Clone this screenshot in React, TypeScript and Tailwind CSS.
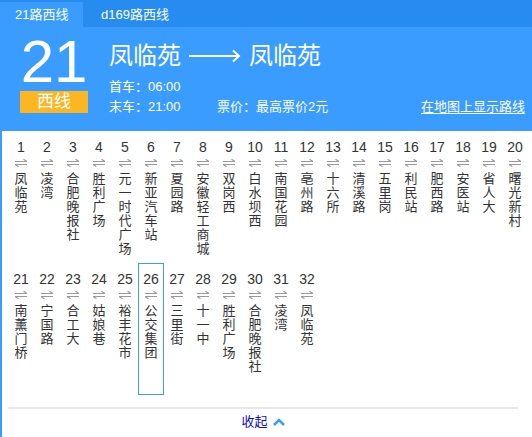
import React from "react";

const stations = [
  "凤临苑", "凌湾", "合肥晚报社", "胜利广场", "元一时代广场", "新亚汽车站", "夏园路",
  "安徽轻工商城", "双岗西", "白水坝西", "南国花园", "亳州路", "十六所", "清溪路",
  "五里岗", "利民站", "肥西路", "安医站", "省人大", "曙光新村", "南薰门桥", "宁国路",
  "合工大", "姑娘巷", "裕丰花市", "公交集团", "三里街", "十一中", "胜利广场",
  "合肥晚报社", "凌湾", "凤临苑",
];

const Swap = () => (
  <svg width="14" height="8" viewBox="0 0 14 8" fill="none" stroke="#9a9a9a" strokeWidth="1.2">
    <path d="M1 2.5h12M13 2.5l-3.5-2.2" />
    <path d="M1 5.5h12M1 5.5l3.5 2.2" />
  </svg>
);

const App = () => {
  const rows = [stations.slice(0, 20), stations.slice(20)];

  return (
    <div className="w-[532px] h-[437px] overflow-hidden bg-white font-['Liberation_Sans','Noto_Sans_CJK_SC',sans-serif]">
      {/* tabs */}
      <div className="h-[27px] bg-[#268cef] flex items-end">
        <div className="h-[25px] w-[83px] bg-[#3a9cff] text-white text-[13px] leading-[25px] pl-[15px]">
          21路西线
        </div>
        <div className="h-[25px] text-white text-[13px] leading-[25px] pl-[18px]">
          d169路西线
        </div>
      </div>

      {/* header */}
      <div className="h-[104px] bg-[#3a9cff] flex text-white">
        <div className="w-[109px] flex flex-col items-start pl-[20px]">
          <div className="text-[60px] leading-[52px] mt-[9px] w-[68px] text-center">21</div>
          <div className="w-[68px] h-[22px] bg-[#fbb622] text-[17px] leading-[22px] text-center mt-[3px]">
            西线
          </div>
        </div>
        <div className="flex-1 pr-[7px]">
          <div className="flex items-center mt-[15px] h-[28px] text-[24px] leading-[28px]">
            <span>凤临苑</span>
            <svg width="52" height="14" viewBox="0 0 52 14" className="mx-[8px]" fill="none" stroke="white" strokeWidth="2">
              <path d="M0 7h50M44 1.5l6 5.5-6 5.5" />
            </svg>
            <span>凤临苑</span>
          </div>
          <div className="text-[13px] leading-[20px] mt-[7px]">首车：06:00</div>
          <div className="flex text-[13px] leading-[20px]">
            <span className="w-[108px]">末车：21:00</span>
            <span>票价：最高票价2元</span>
            <span className="ml-auto underline underline-offset-2">在地图上显示路线</span>
          </div>
        </div>
      </div>

      {/* stations */}
      <div className="border-l-2 border-[#3a9cff] h-[306px]">
        {rows.map((row, r) => (
          <div key={r} className="flex pl-[6px] h-[132px]">
            {row.map((name, i) => {
              const n = r * 20 + i + 1;
              return (
                <div
                  key={n}
                  className={`w-[26px] h-[132px] flex flex-col items-center pt-[8px] text-[#333] ${
                    n === 26 ? "border border-[#3a9cff]" : "border border-transparent"
                  }`}
                >
                  <div className="text-[14px] leading-[16px] -mt-px">{n}</div>
                  <div className="mt-[4px] h-[8px]">
                    <Swap />
                  </div>
                  <div className="mt-[5px] flex flex-col items-center text-[13px] leading-[14px]">
                    {name.split("").map((c, k) => (
                      <span key={k}>{c}</span>
                    ))}
                  </div>
                </div>
              );
            })}
          </div>
        ))}
        <div className="ml-[6px] mr-[14px] mt-[12px] border-t-2 border-[#e8e8e8] h-[28px] flex items-center justify-center gap-[5px]">
          <span className="text-[13px] text-[#0d0dcc]">收起</span>
          <svg width="12" height="8" viewBox="0 0 12 8" fill="none" stroke="#3a9cff" strokeWidth="2.5">
            <path d="M1 7l5-5 5 5" />
          </svg>
        </div>
      </div>
    </div>
  );
};

export default App;
